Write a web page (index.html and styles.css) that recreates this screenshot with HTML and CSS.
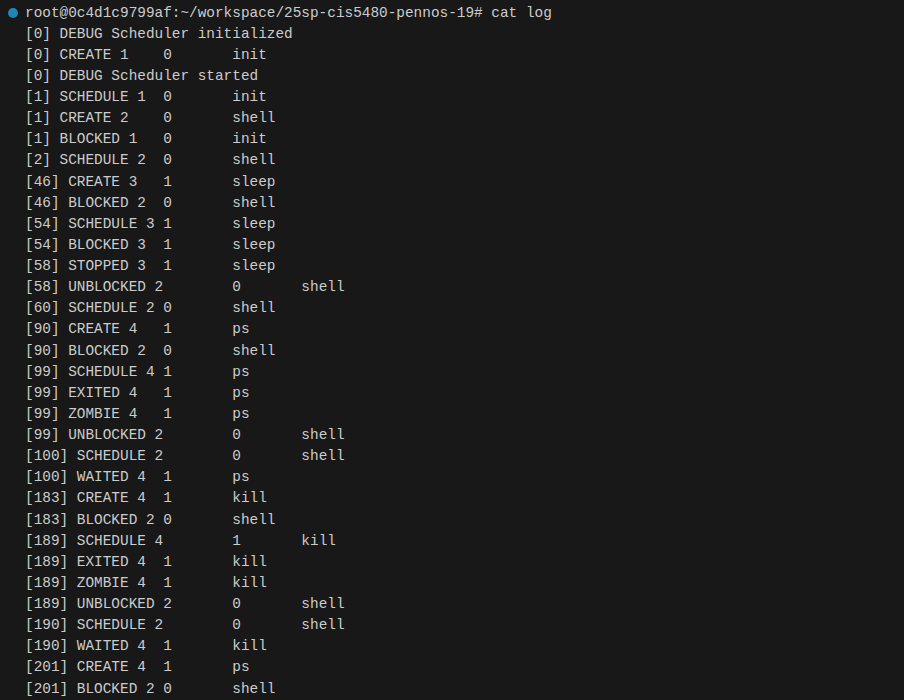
FILE: index.html
```html
<!DOCTYPE html>
<html>
<head>
<meta charset="utf-8">
<link rel="stylesheet" href="styles.css">
</head>
<body>
<div class="term">
<div class="row"><span class="gutter"><span class="dot"></span></span><pre class="line">root@0c4d1c9799af:~/workspace/25sp-cis5480-pennos-19# cat log</pre></div>
<div class="row"><span class="gutter"></span><pre class="line">[0] DEBUG Scheduler initialized</pre></div>
<div class="row"><span class="gutter"></span><pre class="line">[0] CREATE 1	0	init</pre></div>
<div class="row"><span class="gutter"></span><pre class="line">[0] DEBUG Scheduler started</pre></div>
<div class="row"><span class="gutter"></span><pre class="line">[1] SCHEDULE 1	0	init</pre></div>
<div class="row"><span class="gutter"></span><pre class="line">[1] CREATE 2	0	shell</pre></div>
<div class="row"><span class="gutter"></span><pre class="line">[1] BLOCKED 1	0	init</pre></div>
<div class="row"><span class="gutter"></span><pre class="line">[2] SCHEDULE 2	0	shell</pre></div>
<div class="row"><span class="gutter"></span><pre class="line">[46] CREATE 3	1	sleep</pre></div>
<div class="row"><span class="gutter"></span><pre class="line">[46] BLOCKED 2	0	shell</pre></div>
<div class="row"><span class="gutter"></span><pre class="line">[54] SCHEDULE 3	1	sleep</pre></div>
<div class="row"><span class="gutter"></span><pre class="line">[54] BLOCKED 3	1	sleep</pre></div>
<div class="row"><span class="gutter"></span><pre class="line">[58] STOPPED 3	1	sleep</pre></div>
<div class="row"><span class="gutter"></span><pre class="line">[58] UNBLOCKED 2	0	shell</pre></div>
<div class="row"><span class="gutter"></span><pre class="line">[60] SCHEDULE 2	0	shell</pre></div>
<div class="row"><span class="gutter"></span><pre class="line">[90] CREATE 4	1	ps</pre></div>
<div class="row"><span class="gutter"></span><pre class="line">[90] BLOCKED 2	0	shell</pre></div>
<div class="row"><span class="gutter"></span><pre class="line">[99] SCHEDULE 4	1	ps</pre></div>
<div class="row"><span class="gutter"></span><pre class="line">[99] EXITED 4	1	ps</pre></div>
<div class="row"><span class="gutter"></span><pre class="line">[99] ZOMBIE 4	1	ps</pre></div>
<div class="row"><span class="gutter"></span><pre class="line">[99] UNBLOCKED 2	0	shell</pre></div>
<div class="row"><span class="gutter"></span><pre class="line">[100] SCHEDULE 2	0	shell</pre></div>
<div class="row"><span class="gutter"></span><pre class="line">[100] WAITED 4	1	ps</pre></div>
<div class="row"><span class="gutter"></span><pre class="line">[183] CREATE 4	1	kill</pre></div>
<div class="row"><span class="gutter"></span><pre class="line">[183] BLOCKED 2	0	shell</pre></div>
<div class="row"><span class="gutter"></span><pre class="line">[189] SCHEDULE 4	1	kill</pre></div>
<div class="row"><span class="gutter"></span><pre class="line">[189] EXITED 4	1	kill</pre></div>
<div class="row"><span class="gutter"></span><pre class="line">[189] ZOMBIE 4	1	kill</pre></div>
<div class="row"><span class="gutter"></span><pre class="line">[189] UNBLOCKED 2	0	shell</pre></div>
<div class="row"><span class="gutter"></span><pre class="line">[190] SCHEDULE 2	0	shell</pre></div>
<div class="row"><span class="gutter"></span><pre class="line">[190] WAITED 4	1	kill</pre></div>
<div class="row"><span class="gutter"></span><pre class="line">[201] CREATE 4	1	ps</pre></div>
<div class="row"><span class="gutter"></span><pre class="line">[201] BLOCKED 2	0	shell</pre></div>
</div>
</body>
</html>
```
FILE: styles.css
```css
html, body {
  margin: 0;
  padding: 0;
  background: #181818;
  height: 100%;
  overflow: hidden;
}
.term {
  padding-top: 2.5px;
  font-family: "Liberation Mono", "DejaVu Sans Mono", monospace;
  font-size: 14.4px;
  line-height: 21.125px;
  color: #cccccc;
}
.row {
  display: flex;
  align-items: center;
  height: 21.125px;
}
.gutter {
  width: 25px;
  flex: none;
  display: flex;
  align-items: center;
  justify-content: flex-start;
  padding-left: 8px;
  box-sizing: border-box;
}
.dot {
  width: 10px;
  height: 10px;
  border-radius: 50%;
  background: #1f86b8;
}
.line {
  margin: 0;
  font: inherit;
  white-space: pre;
  tab-size: 8;
  -moz-tab-size: 8;
}
```
